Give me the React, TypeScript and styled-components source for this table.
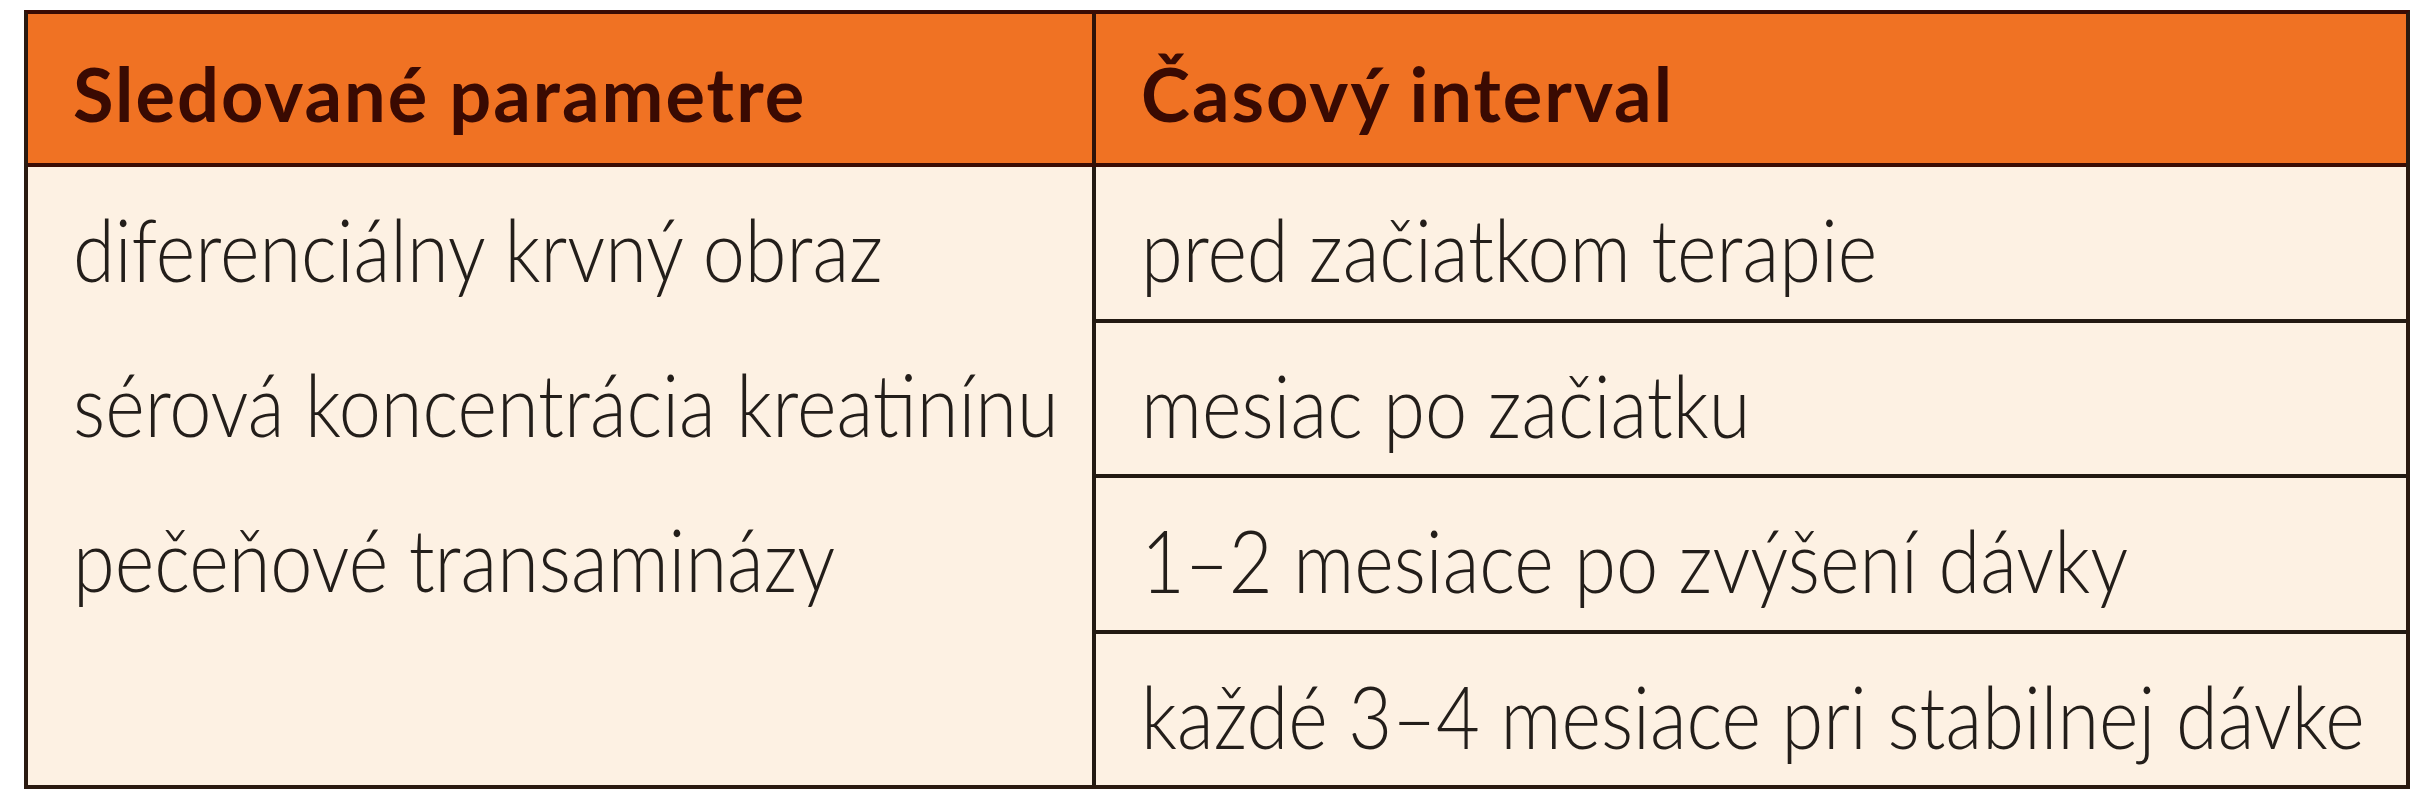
import React from "react";
import styled, { createGlobalStyle } from "styled-components";

const GlobalStyle = createGlobalStyle`
  html, body {
    margin: 0;
    padding: 0;
    background: #ffffff;
  }
`;

const Page = styled.div`
  padding: 10px 0 0 24px;
`;

const Table = styled.div`
  width: 2386px;
  box-sizing: border-box;
  border: 4px solid #2a1a10;
  border-top-color: #3a0c04;
  display: grid;
  grid-template-columns: 1068px minmax(0, 1fr);
  grid-template-rows: 153px 618px;
  font-family: "Lato", "Liberation Sans", sans-serif;
`;

const HeadCell = styled.div<{ $last?: boolean }>`
  background: #f07223;
  color: #3a0a02;
  font-weight: 700;
  font-size: 74px;
  letter-spacing: 2px;
  line-height: 1;
  padding: 43px 0 0 45px;
  box-sizing: border-box;
  white-space: nowrap;
  overflow: hidden;
  border-bottom: 4px solid #3a0c04;
  border-right: ${(p) => (p.$last ? "none" : "4px solid #2e1208")};
`;

const LeftCell = styled.div`
  background: #fdf1e3;
  border-right: 4px solid #231a12;
  display: flex;
  flex-direction: column;
  min-width: 0;
`;

const RightCell = styled.div`
  background: #fdf1e3;
  display: flex;
  flex-direction: column;
  min-width: 0;
`;

const Line = styled.div<{ $ruled?: boolean }>`
  flex: 1;
  box-sizing: border-box;
  color: #231e1a;
  font-weight: 300;
  font-size: 87px;
  line-height: 1;
  padding: 38px 0 0 45px;
  white-space: nowrap;
  overflow: hidden;
  border-bottom: ${(p) => (p.$ruled ? "4px solid #231a12" : "none")};
`;

const LeftLine = styled(Line)`
  flex: 0 0 155px;
`;

/* the printed table uses a condensed face */
const Narrow = styled.span`
  display: inline-block;
  transform: scaleX(0.87);
  transform-origin: left center;
`;

const params = [
  "diferenciálny krvný obraz",
  "sérová koncentrácia kreatinínu",
  "pečeňové transaminázy",
];

const intervals = [
  "pred začiatkom terapie",
  "mesiac po začiatku",
  "1–2 mesiace po zvýšení dávky",
  "každé 3–4 mesiace pri stabilnej dávke",
];

export default function App() {
  return (
    <>
      <GlobalStyle />
      <Page>
        <Table>
          <HeadCell>Sledované parametre</HeadCell>
          <HeadCell $last>Časový interval</HeadCell>
          <LeftCell>
            {params.map((p) => (
              <LeftLine key={p}>
                <Narrow>{p}</Narrow>
              </LeftLine>
            ))}
          </LeftCell>
          <RightCell>
            {intervals.map((t, i) => (
              <Line key={t} $ruled={i < intervals.length - 1}>
                <Narrow>{t}</Narrow>
              </Line>
            ))}
          </RightCell>
        </Table>
      </Page>
    </>
  );
}
